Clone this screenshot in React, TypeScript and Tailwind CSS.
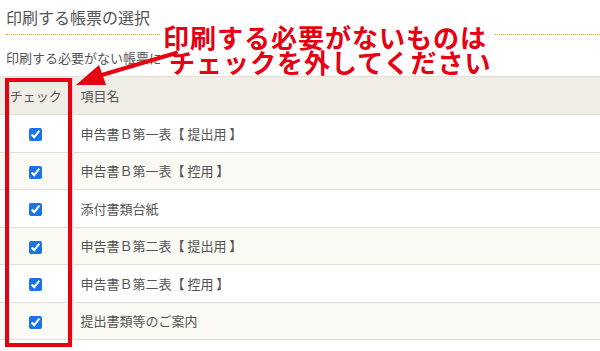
import React from "react";

const rows = [
  "申告書Ｂ第一表【 提出用 】",
  "申告書Ｂ第一表【 控用 】",
  "添付書類台紙",
  "申告書Ｂ第二表【 提出用 】",
  "申告書Ｂ第二表【 控用 】",
  "提出書類等のご案内",
];

export default function App() {
  return (
    <div
      className="relative w-[600px] h-[351px] overflow-hidden bg-white text-[#555]"
      style={{ fontFamily: '"Noto Sans CJK JP", "Noto Sans", sans-serif' }}
    >
      <div className="pl-[6px] pt-[5px]">
        <h1 className="text-[16px] leading-[24px] font-normal text-[#555]">印刷する帳票の選択</h1>
        <div className="mt-[5px] border-b border-dotted border-[#e0a030]" />
        <p className="mt-[14px] text-[13px] leading-[18px] text-[#555]">
          印刷する必要がない帳票については、チェックを外してください。
        </p>
      </div>

      <table className="mt-[9px] w-full border-collapse text-[13px] text-[#555]">
        <thead>
          <tr className="h-[38px] bg-[#efede6] border-t border-b border-[#e2dfd6]">
            <th className="w-[72px] font-normal text-center border-r border-[#ddd]">チェック</th>
            <th className="pl-[8px] font-normal text-left">項目名</th>
          </tr>
        </thead>
        <tbody>
          {rows.map((r, i) => (
            <tr
              key={r}
              className={`h-[37.5px] border-b border-[#e2e0da] ${i % 2 === 1 ? "bg-[#faf9f4]" : "bg-white"}`}
            >
              <td className="text-center border-r border-[#ddd]">
                <input
                  type="checkbox"
                  defaultChecked
                  className="w-[13px] h-[13px] align-middle accent-[#1a73e8]"
                />
              </td>
              <td className="pl-[8px]">{r}</td>
            </tr>
          ))}
        </tbody>
      </table>

      {/* annotation overlay */}
      <div className="absolute left-[5px] top-[78px] w-[67px] h-[269px] border-[4px] border-[#e60012]" />

      <div className="absolute left-[160px] top-[24px] bg-white px-[3px] text-[#e60012] font-bold text-[26px] leading-[25px] tracking-[1px]">
        <div>印刷する必要がないものは</div>
        <div className="pl-[6px]">チェックを外してください</div>
      </div>

      <svg className="absolute left-0 top-0" width="600" height="351" viewBox="0 0 600 351">
        <line x1="176" y1="53" x2="95" y2="77" stroke="#e60012" strokeWidth="4" strokeLinecap="round" />
        <polygon points="76,85 99,65 106,85" fill="#e60012" />
      </svg>
    </div>
  );
}
